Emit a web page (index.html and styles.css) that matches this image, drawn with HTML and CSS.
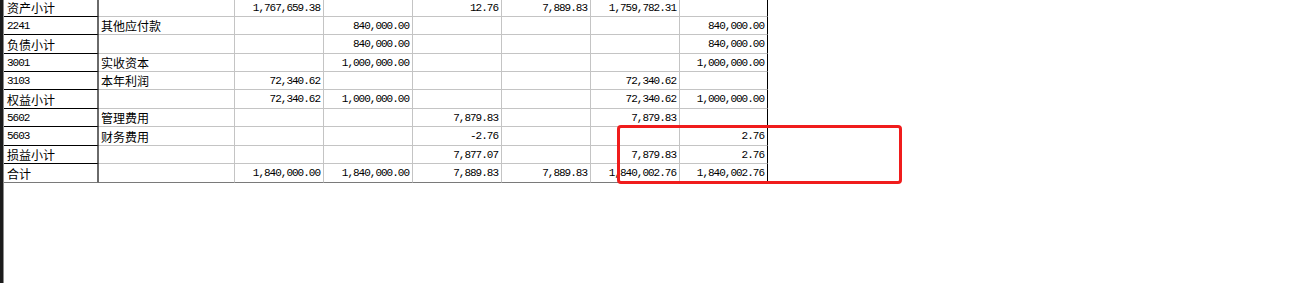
FILE: index.html
```html
<!DOCTYPE html>
<html lang="zh-CN">
<head>
<meta charset="utf-8">
<title>科目余额表</title>
<link rel="stylesheet" href="styles.css">
</head>
<body>
<div class="screen">
  <div class="frame-left"></div>
  <div class="sheet">
    <div class="row">
      <div class="cell head cjk">资产小计</div><div class="cell cjk"></div><div class="cell num">1,767,659.38</div><div class="cell num"></div><div class="cell num">12.76</div><div class="cell num">7,889.83</div><div class="cell num">1,759,782.31</div><div class="cell num last"></div>
    </div>
    <div class="row">
      <div class="cell head code">2241</div><div class="cell cjk">其他应付款</div><div class="cell num"></div><div class="cell num">840,000.00</div><div class="cell num"></div><div class="cell num"></div><div class="cell num"></div><div class="cell num last">840,000.00</div>
    </div>
    <div class="row">
      <div class="cell head cjk">负债小计</div><div class="cell cjk"></div><div class="cell num"></div><div class="cell num">840,000.00</div><div class="cell num"></div><div class="cell num"></div><div class="cell num"></div><div class="cell num last">840,000.00</div>
    </div>
    <div class="row">
      <div class="cell head code">3001</div><div class="cell cjk">实收资本</div><div class="cell num"></div><div class="cell num">1,000,000.00</div><div class="cell num"></div><div class="cell num"></div><div class="cell num"></div><div class="cell num last">1,000,000.00</div>
    </div>
    <div class="row">
      <div class="cell head code">3103</div><div class="cell cjk">本年利润</div><div class="cell num">72,340.62</div><div class="cell num"></div><div class="cell num"></div><div class="cell num"></div><div class="cell num">72,340.62</div><div class="cell num last"></div>
    </div>
    <div class="row">
      <div class="cell head cjk">权益小计</div><div class="cell cjk"></div><div class="cell num">72,340.62</div><div class="cell num">1,000,000.00</div><div class="cell num"></div><div class="cell num"></div><div class="cell num">72,340.62</div><div class="cell num last">1,000,000.00</div>
    </div>
    <div class="row">
      <div class="cell head code">5602</div><div class="cell cjk">管理费用</div><div class="cell num"></div><div class="cell num"></div><div class="cell num">7,879.83</div><div class="cell num"></div><div class="cell num">7,879.83</div><div class="cell num last"></div>
    </div>
    <div class="row">
      <div class="cell head code">5603</div><div class="cell cjk">财务费用</div><div class="cell num"></div><div class="cell num"></div><div class="cell num">-2.76</div><div class="cell num"></div><div class="cell num"></div><div class="cell num last">2.76</div>
    </div>
    <div class="row">
      <div class="cell head cjk">损益小计</div><div class="cell cjk"></div><div class="cell num"></div><div class="cell num"></div><div class="cell num">7,877.07</div><div class="cell num"></div><div class="cell num">7,879.83</div><div class="cell num last">2.76</div>
    </div>
    <div class="row total">
      <div class="cell head cjk">合计</div><div class="cell cjk"></div><div class="cell num">1,840,000.00</div><div class="cell num">1,840,000.00</div><div class="cell num">7,889.83</div><div class="cell num">7,889.83</div><div class="cell num">1,840,002.76</div><div class="cell num last">1,840,002.76</div>
    </div>
  </div>
  <div class="highlight"></div>
</div>
</body>
</html>
```
FILE: styles.css
```css
html, body {
  margin: 0;
  padding: 0;
  background: #ffffff;
}

body {
  width: 1291px;
  height: 283px;
  overflow: hidden;
}

.screen {
  position: relative;
  display: flex;
  align-items: flex-start;
  height: 283px;
}

.frame-left {
  flex: 0 0 3px;
  height: 283px;
  background: #1c1c1c;
  border-right: 1px solid #8c8c8c;
}

.sheet {
  display: flex;
  flex-direction: column;
  margin-top: -1px;
}

.row {
  display: grid;
  grid-template-columns: 95px 136px repeat(5, 89px) 88px;
  height: 18px;
}

.row:nth-child(3),
.row:nth-child(6),
.row:nth-child(8),
.row:nth-child(10) {
  height: 19px;
}

.cell {
  box-sizing: border-box;
  display: flex;
  align-items: center;
  border-right: 1px solid #c4c4c4;
  border-bottom: 1px solid #c4c4c4;
  color: #000000;
  white-space: nowrap;
  overflow: hidden;
}

.cell.head {
  border-right: 2px solid #6a6a6a;
  border-bottom: 1px solid #000000;
  padding-left: 3px;
}

.cell.last {
  border-right: 1px solid #000000;
}

.total .cell {
  border-bottom: 1px solid #7a7a7a;
}

.cjk {
  font-family: "Noto Sans CJK SC", "Noto Sans CJK TC", sans-serif;
  font-size: 12px;
  padding-left: 2px;
}

.code {
  font-family: "Liberation Mono", "DejaVu Sans Mono", monospace;
  font-size: 11px;
  letter-spacing: -1px;
}

.num {
  justify-content: flex-end;
  font-family: "Liberation Mono", "DejaVu Sans Mono", monospace;
  font-size: 11px;
  letter-spacing: -1px;
  padding-right: 3px;
}

.highlight {
  position: absolute;
  left: 617px;
  top: 125px;
  width: 285px;
  height: 59px;
  box-sizing: border-box;
  border: 3px solid #f01c1c;
  border-radius: 4px;
}
```
